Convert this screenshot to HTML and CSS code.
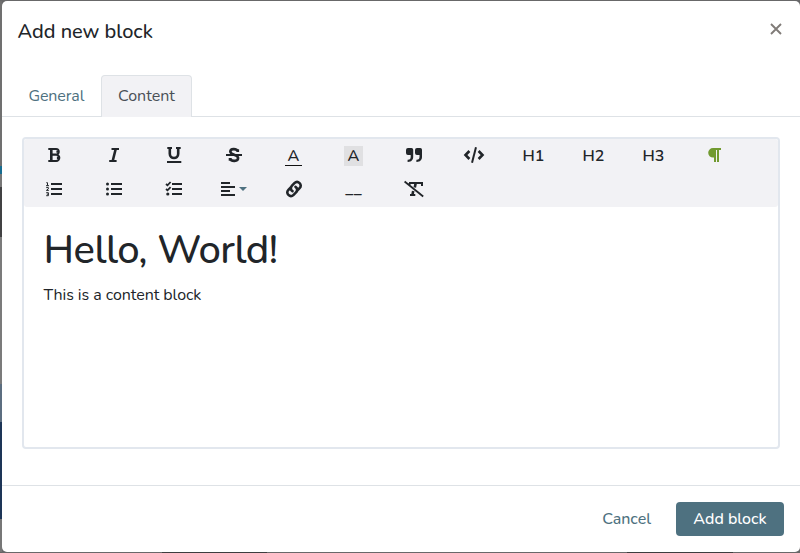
FILE: index.html
```html
<!DOCTYPE html>
<html lang="en">
<head>
<meta charset="utf-8">
<title>Add new block</title>
<link rel="stylesheet" href="styles.css">
</head>
<body>
<main class="modal">
  <header class="header">
    <h2>Add new block</h2>
    <button class="close" aria-label="Close"><svg width="12" height="12" viewBox="0 0 12 12"><path d="M1 1l10 10M11 1L1 11" fill="none" stroke="#807b78" stroke-width="1.9"/></svg></button>
  </header>
  <nav class="tabs">
    <a class="tab">General</a>
    <a class="tab active">Content</a>
  </nav>
  <section class="editor">
    <div class="toolbar">
      <button><svg viewBox="0 0 24 24"><path class="line" d="M6.3 6H14a2.7 2.7 0 0 1 0 5.6H9M9 11.7h5.2a3.1 3.1 0 0 1 0 6.3H6.3"/><path class="line heavy" d="M9.3 6v12M15.7 7.8v2M16.2 13.5v2.6"/></svg></button>
      <button><svg viewBox="0 0 24 24"><path class="line" d="M9.5 6H17M7.2 18h7.4"/><path class="line heavy" d="M13.7 6l-3 12"/></svg></button>
      <button><svg viewBox="0 0 24 24"><path class="line" d="M5.3 5H10M14 5h4.7M5 19h14.3"/><path class="line heavy" d="M7.8 5v5.8c0 5.6 8.4 5.6 8.4 0V5"/></svg></button>
      <button><svg viewBox="0 0 24 24"><path class="line" d="M4 12h16"/><path class="line heavy" d="M15.8 9V6.2M15.5 8C14.5 5.5 8.4 5.4 8.3 8.6c0 3.7 7.8 2.6 7.8 6.4 0 3.7-6.9 3.8-7.8.6M8 17.8V15"/></svg></button>
      <button><span class="letter foreground">A</span></button>
      <button><span class="letter background">A</span></button>
      <button><svg viewBox="0 0 24 24"><path d="M6 5h3.5a1.7 1.7 0 0 1 1.7 1.7v7.1c0 3.3-2 5.2-5.2 5.2H5.6v-2.2H6c2 0 2.7-1.2 2.7-3V12H6a2 2 0 0 1-2-2V7a2 2 0 0 1 2-2zm9 0h3.3A1.7 1.7 0 0 1 20 6.7v7.1c0 3.3-2 5.2-5.2 5.2h-.4v-2.2h.4c2 0 2.7-1.2 2.7-3V12H15a2 2 0 0 1-2-2V7a2 2 0 0 1 2-2z"/></svg></button>
      <button><svg viewBox="0 0 24 24"><path class="line heavy" d="M7.4 8L3.5 12l3.9 4M16.6 8l3.9 4-3.9 4"/><path class="line" d="M14 4.3L10 19.7"/></svg></button>
      <button><span class="letter heading">H1</span></button>
      <button><span class="letter heading">H2</span></button>
      <button><span class="letter heading">H3</span></button>
      <button class="paragraph"><svg viewBox="0 0 24 24"><path d="M11 5h8v2h-2v12h-2V7h-1v12h-2v-4.4h-1A4.8 4.8 0 0 1 11 5z"/></svg></button>
      <button><svg viewBox="0 0 24 24"><path d="M9 6h11v2H9zM9 11h11v2H9zM9 16h11v2H9z"/><path class="thin" d="M4.3 5.7h1.2v3M4 8.7h3M4.2 10.6h2.2v1.2l-2 1.6h2.4M4.2 15.7h2.2v3H4.2M4.8 17.2h1.5"/></svg></button>
      <button><svg viewBox="0 0 24 24"><path d="M9 6h11v2H9zM9 11h11v2H9zM9 16h11v2H9z"/><circle cx="5.5" cy="7" r="1.5"/><circle cx="5.5" cy="12" r="1.5"/><circle cx="5.5" cy="17" r="1.5"/></svg></button>
      <button><svg viewBox="0 0 24 24"><path d="M10 6h10v2H10zM10 11h10v2H10zM10 16h10v2H10z"/><path class="check" d="M4 7l1.5 1.3L8.6 5M4 12l1.5 1.3 3.1-3.2"/><circle cx="5.8" cy="17" r="1.6"/></svg></button>
      <button><svg viewBox="0 0 24 24"><path d="M-1 5h9v2h-9zM-1 9h14v2H-1zM-1 13h9v2h-9zM-1 17h14v2H-1z"/><path class="caret" d="M17 10h8l-4 4z"/></svg></button>
      <button><svg viewBox="0 0 24 24"><path class="link" d="M10.5 14.2c-2.1-1.4-2.1-4-.5-5.6l2.4-2.4c3.5-3.4 8.6 1.5 5.2 5L15 13.8M13.5 9.8c2.1 1.4 2.1 4 .5 5.6l-2.4 2.4c-3.5 3.4-8.6-1.5-5.2-5L9 10.2"/></svg></button>
      <button><span class="letter rule">__</span></button>
      <button><svg viewBox="0 0 24 24"><path class="line" d="M7 6h14M20 5v4M7.5 6v2"/><path class="line heavy" d="M13.7 6l-.9 4.5M11.2 14l-.8 4.2"/><path class="line" d="M8 18h5.3"/><path class="line slash" d="M2.6 4.5l18.6 15"/></svg></button>
    </div>
    <article class="content">
      <h1>Hello, World!</h1>
      <p>This is a content block</p>
    </article>
  </section>
  <footer class="footer">
    <button class="cancel">Cancel</button>
    <button class="submit">Add block</button>
  </footer>
</main>
</body>
</html>
```
FILE: styles.css
```css
* { box-sizing: border-box; }
body {
  margin: 0;
  height: 553px;
  padding: 1px 0 1px 2px;
  overflow: hidden;
  font: 16px/24px Nunito, Lato, sans-serif;
  color: #212529;
  background:
    linear-gradient(90deg, transparent 162px, #3d3d3f 162px 267px, transparent 267px 627px, #3d3d3f 627px 733px, transparent 733px) 0 552px / 800px 1px no-repeat,
    linear-gradient(#707070 0 165px, #176d91 165px 173px, #777 173px 186px, #414143 186px 236px, #7b7b7b 236px 383px, #5c6e80 383px 421px, #1d3557 421px 518px, #777 518px 551px, #636363 551px) 0 1px / 2px 552px no-repeat,
    #686869;
}
button { border: 0; padding: 0; background: none; color: inherit; font: inherit; }
h1, h2, p { margin: 0; font-weight: 500; }
.modal { height: 551px; display: flex; flex-direction: column; background: #fff; border-radius: 5px; }
.header { height: 74px; padding: 15px 18px 0 15.5px; display: flex; justify-content: space-between; align-items: flex-start; }
.header h2 { font-size: 20px; line-height: 32px; font-weight: 550; letter-spacing: -.03px; }
.close { height: 26px; display: flex; align-items: center; }
.tabs { height: 42px; padding-left: 10px; display: flex; border-bottom: 1px solid #dee2e6; }
.tab { height: 42px; padding: 8px 17px 0 16px; border: 1px solid transparent; border-bottom: 0; border-radius: 4px 4px 0 0; color: #4e7180; }
.tab:first-child { width: 89px; padding-left: 15.4px; letter-spacing: -.1px; }
.tab.active { width: 91px; color: #495057; background: #f2f2f5; border-color: #dee2e6; }
.editor { height: 312px; margin: 20px 20px 0; border: 2px solid #e2e7ee; border-radius: 4px; }
.toolbar { height: 68px; display: grid; grid-template-columns: repeat(12, 60px); grid-auto-rows: 34px; background: #f2f2f5; border-radius: 3px; }
.toolbar button { display: flex; align-items: center; justify-content: center; height: 32px; }
svg { display: block; fill: #212529; overflow: visible; }
.toolbar svg { width: 24px; height: 24px; }
.line { fill: none; stroke: #212529; stroke-width: 2; }
.heavy { stroke-width: 2.6; }
.thin { fill: none; stroke: #212529; stroke-width: 1; }
.check { fill: none; stroke: #212529; stroke-width: 1.8; }
.link { fill: none; stroke: #212529; stroke-width: 2.6; stroke-linecap: round; }
.slash { stroke-width: 1.8; }
.caret { fill: #4e7180; }
.paragraph svg { fill: #719a30; }
.letter { font-weight: 600; line-height: 20px; }
.foreground { width: 17px; height: 18px; margin: 3px 1px 0 0; line-height: 17px; border-bottom: 1px solid #111; }
.background { width: 19px; height: 20px; margin: 2px 1px 0 0; background: #e0e0e2; }
.heading { margin: 2px 1px 0 0; }
.rule { margin-right: 1px; font-size: 17px; }
.content { padding: 19px 20px 0 19.5px; }
.content h1 { font-size: 40px; line-height: 48px; letter-spacing: -.5px; }
.content p { margin-top: 9px; font-weight: 400; letter-spacing: -.06px; }
.footer { margin-top: auto; height: 67px; padding: 0 16px; border-top: 1px solid #dee2e6; display: flex; justify-content: flex-end; align-items: center; gap: 25px; font-weight: 500; }
.cancel { color: #4e7180; }
.submit { width: 108px; height: 34px; color: #fff; background: #4e7180; border-radius: 4px; }
```
